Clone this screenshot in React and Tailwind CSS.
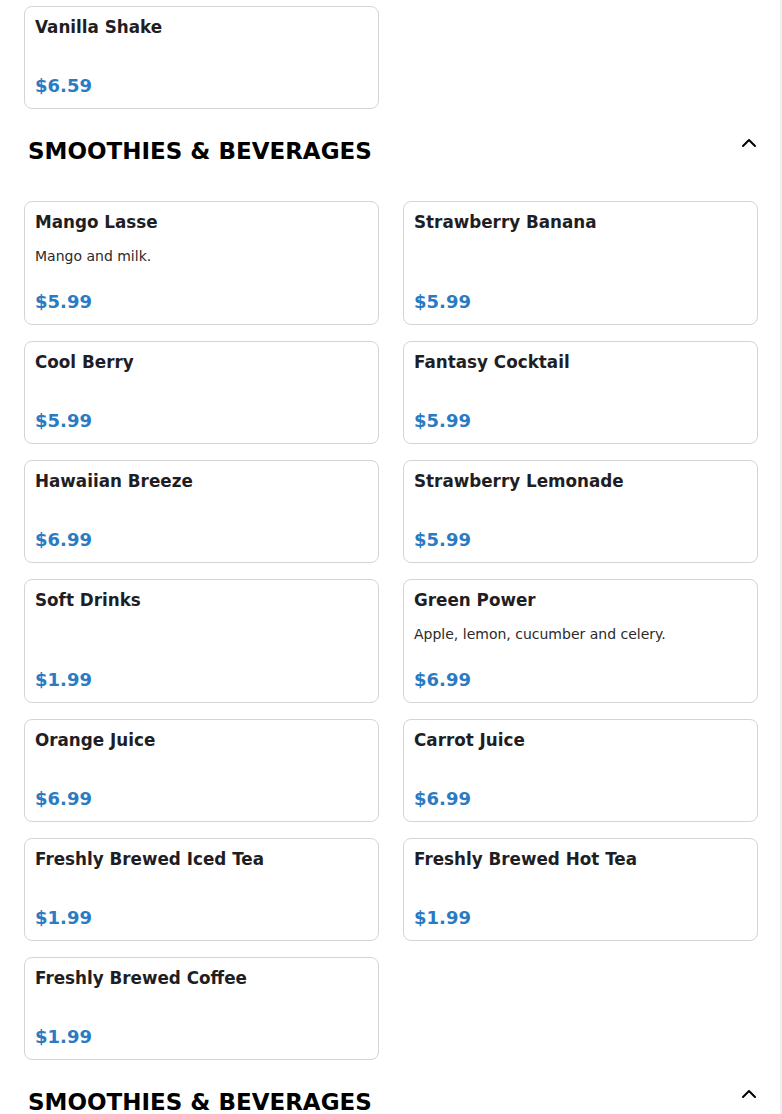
import { ChevronUp } from 'lucide-react'

const smoothies = [
    { name: 'Mango Lasse', description: 'Mango and milk.', price: '$5.99' },
    { name: 'Strawberry Banana', price: '$5.99' },
    { name: 'Cool Berry', price: '$5.99' },
    { name: 'Fantasy Cocktail', price: '$5.99' },
    { name: 'Hawaiian Breeze', price: '$6.99' },
    { name: 'Strawberry Lemonade', price: '$5.99' },
    { name: 'Soft Drinks', price: '$1.99' },
    { name: 'Green Power', description: 'Apple, lemon, cucumber and celery.', price: '$6.99' },
    { name: 'Orange Juice', price: '$6.99' },
    { name: 'Carrot Juice', price: '$6.99' },
    { name: 'Freshly Brewed Iced Tea', price: '$1.99' },
    { name: 'Freshly Brewed Hot Tea', price: '$1.99' },
    { name: 'Freshly Brewed Coffee', price: '$1.99' },
]

function MenuItem({ name, description, price }) {
    return (
        <div className="flex flex-col rounded-lg border border-[#d4d4d4] bg-white p-[10px]">
            <div className="pt-[1px] text-[16.8px] font-bold leading-[19px] text-[#1e1e24] mb-[13px]">{name}</div>
            {description && (
                <div className="mt-[1px] text-[14px] leading-[20px] text-[#2a2a2a]">{description}</div>
            )}
            <div className="mt-auto pt-[24px] text-[18px] font-bold leading-[24px] text-[#2b7bc2]">{price}</div>
        </div>
    )
}

function SectionHeader({ title }) {
    return (
        <div className="flex items-start justify-between mt-[22px]">
            <h2 className="pt-[4px] pl-[4px] text-[23px] font-bold leading-[32px] text-black">{title}</h2>
            <button className="-mr-[3px] text-black">
                <ChevronUp size={24} strokeWidth={2} />
            </button>
        </div>
    )
}

export default function App() {
    return (
        <div
            className="min-h-[1114px] bg-white border-r-2 border-[#efefef] pl-6 pr-[22px] pt-[6px]"
            style={{ fontFamily: '"DejaVu Sans", Verdana, sans-serif' }}
        >
            <div className="grid grid-cols-2 gap-x-6 gap-y-4">
                <MenuItem name="Vanilla Shake" price="$6.59" />
            </div>

            <SectionHeader title="SMOOTHIES & BEVERAGES" />
            <div className="mt-[34px] grid grid-cols-2 gap-x-6 gap-y-4">
                {smoothies.map((item) => (
                    <MenuItem key={item.name} {...item} />
                ))}
            </div>

            <SectionHeader title="SMOOTHIES & BEVERAGES" />
        </div>
    )
}
